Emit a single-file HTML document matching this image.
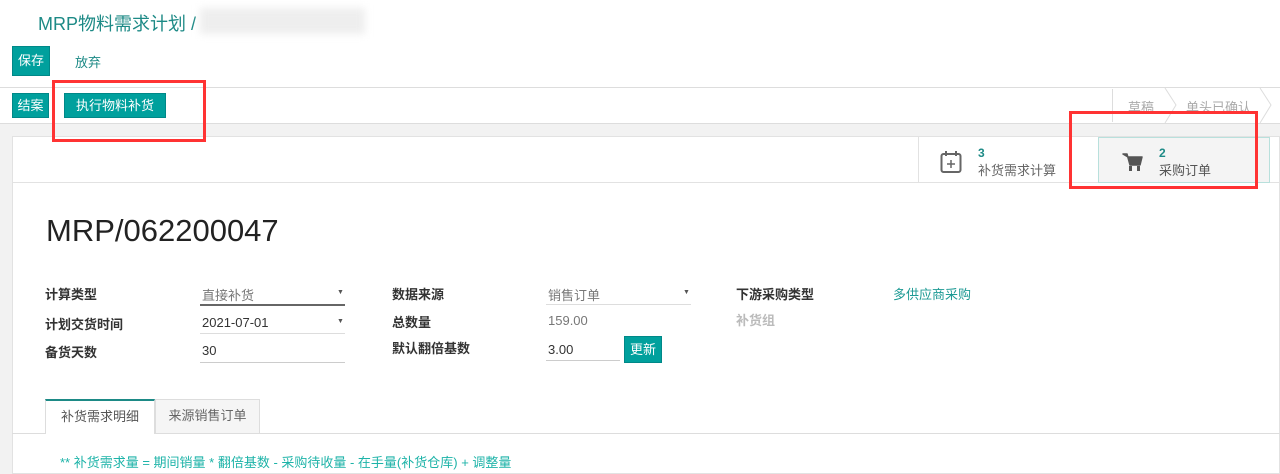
<!DOCTYPE html>
<html><head><meta charset="utf-8"><style>
*{margin:0;padding:0;box-sizing:border-box}
body{width:1280px;height:474px;overflow:hidden;background:#fff;font-family:"Liberation Sans","Noto Sans CJK SC",sans-serif;font-size:13px;color:#4c4c4c;position:relative}
.a{position:absolute}
.btn{position:absolute;background:#00a09d;color:#fff;font-size:13px;text-align:center;border:1px solid #088}
.lbl{position:absolute;font-weight:bold;color:#333;font-size:13px}
.val{position:absolute;font-size:13px;color:#555}
.red{position:absolute;border:3px solid #f33}
.arr{position:absolute;font-size:7px;color:#555}
</style></head><body>
<div class="a" style="left:38px;top:10px;font-size:18px;color:#1d8a86">MRP物料需求计划 /</div>
<div class="a" style="left:200px;top:8px;width:165px;height:26px;background:#eee;filter:blur(4px)"></div>
<div class="btn" style="left:12px;top:46px;width:38px;height:30px;line-height:28px">保存</div>
<div class="a" style="left:75px;top:52px;color:#1d8a86">放弃</div>
<div class="a" style="left:0;top:87px;width:1280px;height:1px;background:#ddd"></div>
<div class="btn" style="left:12px;top:93px;width:37px;height:25px;line-height:23px">结案</div>
<div class="btn" style="left:64px;top:93px;width:102px;height:25px;line-height:23px">执行物料补货</div>
<div class="a" style="left:1112px;top:89px;width:168px;height:33px;border-left:1px solid #ddd"></div>
<div class="a" style="left:1128px;top:97px;color:#aaa">草稿</div>
<div class="a" style="left:1186px;top:97px;color:#aaa">单头已确认</div>
<svg class="a" style="left:1160px;top:88px" width="120" height="36"><polyline points="5,0 16,17 5,35" fill="none" stroke="#ddd"/><polyline points="100,0 111,17 100,35" fill="none" stroke="#ddd"/></svg>
<div class="a" style="left:0;top:123px;width:1280px;height:351px;background:#f2f2f2;border-top:1px solid #ddd"></div>
<div class="a" style="left:12px;top:136px;width:1268px;height:338px;background:#fff;border:1px solid #e2e2e2"></div>
<div class="a" style="left:12px;top:182px;width:1268px;height:1px;background:#e2e2e2"></div>
<div class="a" style="left:918px;top:137px;width:1px;height:45px;background:#e2e2e2"></div>
<div class="a" style="left:1098px;top:137px;width:172px;height:46px;background:#f4f4f4;border:1px solid #b8e0dc"></div>
<svg class="a" style="left:940px;top:150px" width="22" height="24"><rect x="1.5" y="4" width="19" height="18" rx="2" fill="none" stroke="#666" stroke-width="2"/><line x1="6" y1="1" x2="6" y2="6" stroke="#666" stroke-width="2"/><line x1="16" y1="1" x2="16" y2="6" stroke="#666" stroke-width="2"/><line x1="11" y1="10" x2="11" y2="18" stroke="#666" stroke-width="1.5"/><line x1="7" y1="14" x2="15" y2="14" stroke="#666" stroke-width="1.5"/></svg>
<div class="a" style="left:978px;top:146px;font-weight:bold;color:#1d8a86;font-size:12px">3</div>
<div class="a" style="left:978px;top:160px;color:#666">补货需求计算</div>
<svg class="a" style="left:1122px;top:152px" width="22" height="20"><path d="M1 2h4l3 11h10l2-8H6z" fill="#555" stroke="#555" stroke-width="1.5" stroke-linejoin="round"/><rect x="7" y="14" width="3" height="5" fill="#555"/><rect x="15" y="14" width="3" height="5" fill="#555"/></svg>
<div class="a" style="left:1159px;top:146px;font-weight:bold;color:#1d8a86;font-size:12px">2</div>
<div class="a" style="left:1159px;top:160px;color:#555">采购订单</div>
<div class="a" style="left:46px;top:213px;font-size:31px;color:#222">MRP/062200047</div>
<div class="lbl" style="left:45px;top:284px">计算类型</div>
<div class="lbl" style="left:45px;top:314px">计划交货时间</div>
<div class="lbl" style="left:45px;top:342px">备货天数</div>
<div class="val" style="left:202px;top:285px;color:#777">直接补货</div>
<div class="a" style="left:200px;top:304px;width:145px;height:2px;background:#666"></div>
<div class="val" style="left:202px;top:315px;color:#333">2021-07-01</div>
<div class="a" style="left:200px;top:333px;width:145px;height:1px;background:#ddd"></div>
<div class="val" style="left:202px;top:343px;color:#333">30</div>
<div class="a" style="left:200px;top:362px;width:145px;height:1px;background:#ccc"></div>
<div class="arr" style="left:337px;top:289px">▼</div>
<div class="arr" style="left:337px;top:318px">▼</div>
<div class="lbl" style="left:392px;top:284px">数据来源</div>
<div class="lbl" style="left:392px;top:312px">总数量</div>
<div class="lbl" style="left:392px;top:338px">默认翻倍基数</div>
<div class="val" style="left:548px;top:285px;color:#777">销售订单</div>
<div class="a" style="left:546px;top:304px;width:145px;height:1px;background:#ddd"></div>
<div class="arr" style="left:683px;top:289px">▼</div>
<div class="val" style="left:548px;top:313px;color:#777">159.00</div>
<div class="val" style="left:548px;top:342px;color:#333">3.00</div>
<div class="a" style="left:546px;top:360px;width:74px;height:1px;background:#ccc"></div>
<div class="btn" style="left:624px;top:336px;width:38px;height:27px;line-height:25px">更新</div>
<div class="lbl" style="left:736px;top:284px">下游采购类型</div>
<div class="a" style="left:736px;top:310px;font-weight:bold;color:#bbb">补货组</div>
<div class="a" style="left:893px;top:284px;color:#1d9a94">多供应商采购</div>
<div class="a" style="left:12px;top:433px;width:1268px;height:1px;background:#ddd"></div>
<div class="a" style="left:45px;top:399px;width:110px;height:35px;border:1px solid #ddd;border-top:2px solid #1d8a86;border-bottom:none;background:#fff;text-align:center;line-height:32px;color:#555">补货需求明细</div>
<div class="a" style="left:155px;top:399px;width:105px;height:34px;border:1px solid #ddd;border-bottom:none;background:#f5f5f5;text-align:center;line-height:32px;color:#666">来源销售订单</div>
<div class="a" style="left:60px;top:452px;color:#1db3a8">** 补货需求量 = 期间销量 * 翻倍基数 - 采购待收量 - 在手量(补货仓库) + 调整量</div>
<div class="red" style="left:52px;top:80px;width:154px;height:62px"></div>
<div class="red" style="left:1069px;top:111px;width:189px;height:78px"></div>
</body></html>
